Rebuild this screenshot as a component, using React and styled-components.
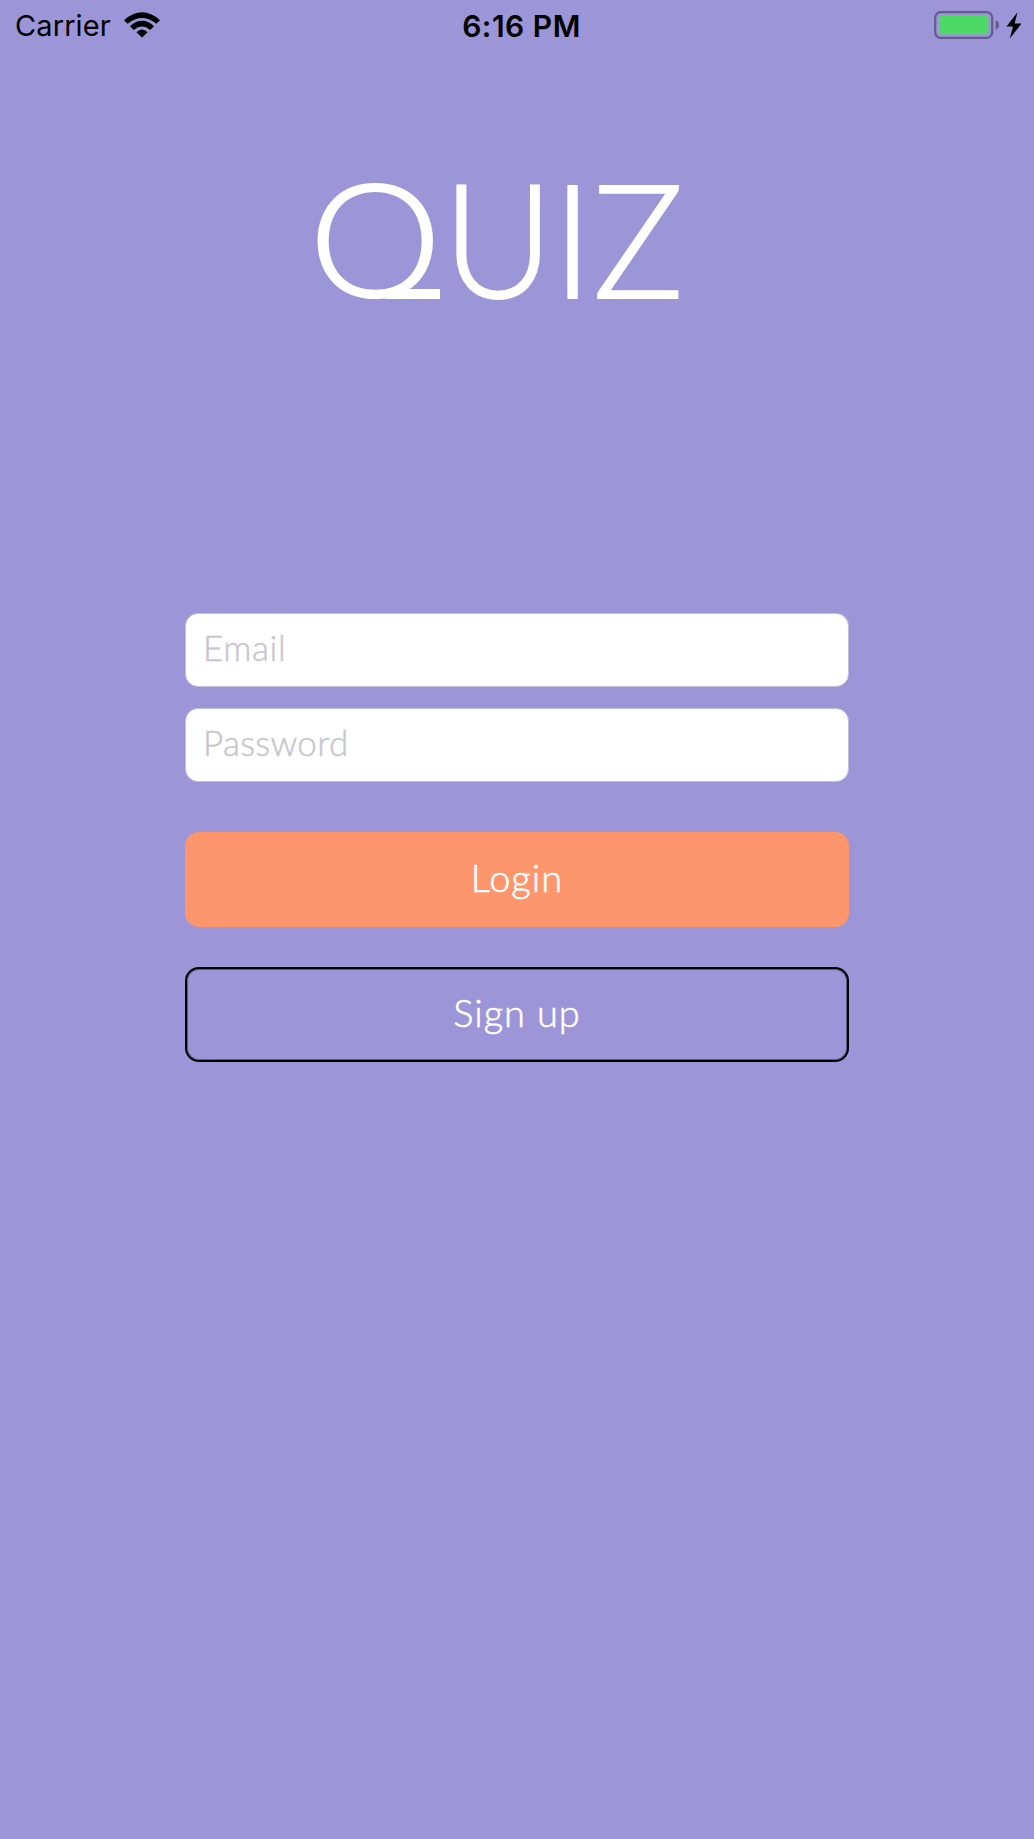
import React from "react";
import styled, { createGlobalStyle } from "styled-components";

const GlobalStyle = createGlobalStyle`
  body { margin: 0; background: #9c95d7; }
  *, *::before, *::after { box-sizing: border-box; }
`;

const Screen = styled.main`
  width: 1034px;
  height: 1839px;
  background: #9c95d7;
  overflow: hidden;
  font-family: Lato, "Open Sans", sans-serif;
  font-weight: 300;
`;

const StatusBar = styled.header`
  display: grid;
  grid-template-columns: 1fr auto 1fr;
  align-items: center;
  height: 50px;
  padding: 0 12px 0 15px;
  font-family: Inter, "Liberation Sans", sans-serif;
  color: #000;
`;

const StatusGroup = styled.div`
  display: flex;
  align-items: center;
  justify-content: ${(p) => (p.$end ? "flex-end" : "flex-start")};
`;

const Carrier = styled.span`
  font-size: 29px;
  font-weight: 400;
  line-height: 48px;
  letter-spacing: 0.1px;
  padding-top: 2px;
  margin-right: 13px;
`;

const Clock = styled.time`
  font-size: 30px;
  font-weight: 600;
  line-height: 48px;
  letter-spacing: 0.5px;
  padding: 2px 0 0 6px;
`;

const Title = styled.h1`
  display: flex;
  margin: 81px 0 0 309px;
  height: 213px;
  font-size: 158px;
  font-weight: 300;
  line-height: 213px;
  color: #fff;
  -webkit-text-stroke: 2.2px #fff;
`;

const Letter = styled.span`
  margin-right: ${(p) => p.$gap || 0}px;
  transform: scaleX(${(p) => p.$stretch || 1});
  transform-origin: left;
`;

const TailedLetter = styled.span`
  position: relative;
  margin-right: 8.5px;
  &::after {
    content: "";
    position: absolute;
    left: 76px;
    top: 158px;
    width: 55px;
    height: 10px;
    background: #fff;
  }
`;

const Bowl = styled.span`
  display: block;
  transform: translateY(-1.5px) scaleX(1.06);
  transform-origin: left;
  clip-path: inset(0 0 43.5px 0);
`;

const Form = styled.form`
  display: flex;
  flex-direction: column;
  width: 664px;
  margin: 269px 0 0 185px;
`;

const Field = styled.input`
  height: 74px;
  margin: 0 0 21px;
  padding: 0 17px 6px;
  border: 1px solid #c2bfdc;
  border-radius: 13px;
  background: #fff;
  font: 300 35px Lato, "Open Sans", sans-serif;
  letter-spacing: ${(p) => p.$tracking || 0}px;
  color: #333;
  outline: none;
  -webkit-text-stroke: 0.5px #c7c7cd;
  &::placeholder { color: #c7c7cd; opacity: 1; }
`;

const Button = styled.button`
  height: 95px;
  margin: ${(p) => p.$top}px 0 0;
  padding: 0 0 5px;
  border: ${(p) => (p.$outlined ? "2px solid #000" : "0")};
  border-radius: 14px;
  background: ${(p) => (p.$outlined ? "transparent" : "#fd956d")};
  box-shadow: ${(p) => (p.$outlined ? "inset 0 0 0 1px rgba(0,0,0,.4)" : "none")};
  font: 300 38px Lato, "Open Sans", sans-serif;
  letter-spacing: ${(p) => p.$tracking || 0}px;
  color: #fff;
  -webkit-text-stroke: 0.6px #fff;
`;

const WifiIcon = () => (
  <svg width="36" height="26" viewBox="0 0 36 26">
    <path d="M0 8.2 Q18 -7.6 36 8.2 L32.4 11.8 Q18 0 3.6 11.8Z" />
    <path d="M6 14.2 Q18 3.4 30 14.2 L26.2 18 Q18 11.2 9.8 18Z" />
    <path d="M12.4 20.2 Q18 15 23.6 20.2 L18 25.6Z" />
  </svg>
);

const BatteryIcon = () => (
  <svg width="88" height="30" viewBox="0 0 88 30">
    <rect x="1.2" y="2.2" width="57" height="25.6" rx="5.5" fill="none" stroke="#635b8c" strokeWidth="2.2" />
    <rect x="5" y="5.8" width="49.4" height="18.4" rx="2" fill="#4cd964" />
    <path d="M61.7 10.2 Q65 11.5 65 15 Q65 18.5 61.7 19.8Z" fill="#635b8c" />
    <path d="M83.5 2.2 L72.5 16.5 H79 L75.8 28.6 L87.5 13.6 H80.6Z" fill="#000" />
  </svg>
);

export default function App() {
  return (
    <Screen>
      <GlobalStyle />
      <StatusBar>
        <StatusGroup>
          <Carrier>Carrier</Carrier>
          <WifiIcon />
        </StatusGroup>
        <Clock>6:16 PM</Clock>
        <StatusGroup $end>
          <BatteryIcon />
        </StatusGroup>
      </StatusBar>
      <Title>
        <TailedLetter>
          <Bowl>Q</Bowl>
        </TailedLetter>
        <Letter $gap={-5.5} $stretch={0.96}>U</Letter>
        <Letter $gap={-0.5}>I</Letter>
        <Letter $stretch={0.96}>Z</Letter>
      </Title>
      <Form onSubmit={(e) => e.preventDefault()}>
        <Field type="email" placeholder="Email" $tracking={0.6} />
        <Field type="password" placeholder="Password" $tracking={0.3} />
        <Button type="submit" $top={29} $tracking={1}>Login</Button>
        <Button type="button" $top={40} $tracking={0.9} $outlined>Sign up</Button>
      </Form>
    </Screen>
  );
}
